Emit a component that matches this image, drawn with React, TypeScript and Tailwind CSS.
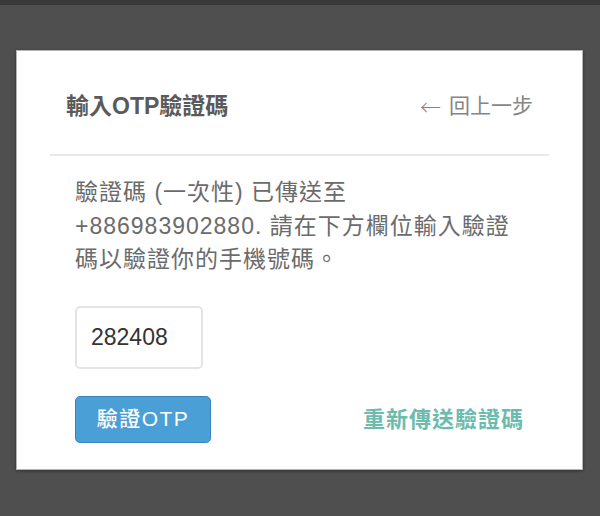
export default function App() {
  const font = { fontFamily: '"Liberation Sans", "Noto Sans CJK TC", sans-serif' };

  return (
    <div className="w-[600px] h-[516px] bg-[#4f4f4f] overflow-hidden" style={font}>
      {/* top strip */}
      <div className="h-[5px] bg-[#393939]" />

      {/* modal card */}
      <div className="mt-[45px] ml-[16px] w-[567px] h-[420px] bg-white border border-[#b5b5b5] shadow-[0_1px_3px_rgba(0,0,0,0.4)] px-[33px]">
        {/* header */}
        <div className="flex items-center justify-between px-[16px] pt-[40px] pb-[33px] border-b-2 border-[#e8e8e8]">
          <h1 className="text-[23px] leading-[30px] font-semibold text-[#5a5a5a]">輸入OTP驗證碼</h1>
          <button className="text-[21px] leading-[30px] text-[#858585] flex items-center gap-[8px]">
            <span className="text-[21px] font-light" style={{ fontFamily: '"Noto Sans CJK TC", sans-serif' }}>
              ←
            </span>
            <span>回上一步</span>
          </button>
        </div>

        {/* body */}
        <div className="px-[25px] pt-[20px]">
          <p className="text-[23px] leading-[33.5px] tracking-[1px] text-[#6b6b6b]">
            驗證碼 (一次性) 已傳送至
            <br />
            +886983902880. 請在下方欄位輸入驗證
            <br />
            碼以驗證你的手機號碼。
          </p>

          <input
            readOnly
            value="282408"
            className="mt-[29px] block w-[128px] h-[63px] rounded-[5px] border-2 border-[#e4e4e4] px-[14px] text-[23px] text-[#333333] outline-none"
            style={font}
          />

          <div className="mt-[27px] flex items-center justify-between">
            <button className="w-[136px] h-[47px] rounded-[5px] bg-[#4a9fd6] border border-[#3a83b8] text-white text-[21px] tracking-[1.5px] font-medium">
              驗證OTP
            </button>
            <button className="text-[22px] font-semibold tracking-[1px] text-[#6cbcae]">重新傳送驗證碼</button>
          </div>
        </div>
      </div>
    </div>
  );
}
